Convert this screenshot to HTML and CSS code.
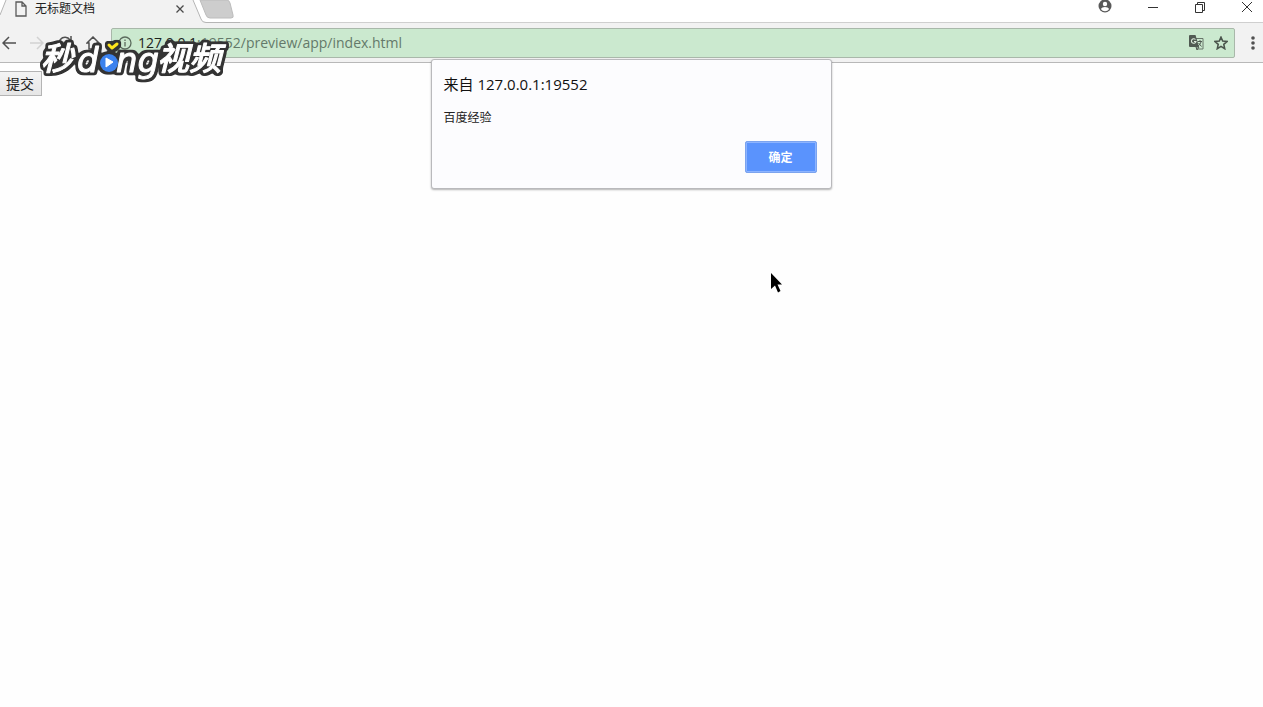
FILE: index.html
```html
<!DOCTYPE html>
<html lang="zh-CN">
<head>
    <meta charset="utf-8">
    <title>无标题文档</title>
    <meta name="viewport" content="width=device-width,initial-scale=1.0">
    <link rel="stylesheet" href="styles.css">
</head>
<body>
<header class="browser">
    <div class="tabs">
        <svg class="tab-shape" width="240" height="24" viewBox="0 0 240 24">
            <path d="M0 24V15L6 0H193L201 19Q202 22.500 206 22.500H240V24Z" fill="#f2f2f2"/>
            <path d="M0 15L6 0M193 0L201 19Q202 22.500 206 22.500H240" fill="none" stroke="#b5b5b5"/>
            <path d="M200 0H227Q229 0 230 3L233 15Q234 18 231 18H210Q207 18 206 15Z" fill="#cdcdcd" stroke="#bcbcbc"/>
        </svg>
        <div class="tab">
            <svg width="12" height="16" viewBox="0 0 12 16" fill="none" stroke="#5a5a5a" stroke-width="1.300"><path d="M1 1H7L11 5V15H1ZM7 1V5H11"/></svg>
            <span class="tab-title">无标题文档</span>
            <button class="icon" aria-label="关闭标签页"><svg width="8" height="8" viewBox="0 0 8 8" stroke="#4a4a4a" stroke-width="1.300"><path d="M.5 .5L7.500 7.500M7.500 .5L.5 7.500"/></svg></button>
        </div>
        <div class="window">
            <button class="icon" aria-label="用户"><svg width="14" height="14" viewBox="0 0 14 14"><circle cx="7" cy="6" r="6.500" fill="#5a5a5a"/><circle cx="7" cy="4" r="2.200" fill="#fff"/><path d="M2.800 9Q4 7 7 7T11.200 9Q9.500 11.200 7 11.200T2.800 9Z" fill="#fff"/></svg></button>
            <button class="icon" aria-label="最小化"><svg width="12" height="12" viewBox="0 0 12 12" stroke="#333"><path d="M1 6.500H11"/></svg></button>
            <button class="icon" aria-label="还原"><svg width="12" height="12" viewBox="0 0 12 12" fill="none" stroke="#333"><path d="M1.500 3.500H8.500V11.500H1.500ZM3.500 3V1.500H10.500V9.500H9"/></svg></button>
            <button class="icon" aria-label="关闭"><svg width="12" height="12" viewBox="0 0 12 12" stroke="#333"><path d="M1 1L11 11M11 1L1 11"/></svg></button>
        </div>
    </div>
    <div class="toolbar">
        <nav class="nav">
            <button class="icon" aria-label="后退"><svg width="14" height="14" viewBox="0 0 14 14" fill="none" stroke="#505050" stroke-width="1.500"><path d="M14 7H1M7 1L1 7L7 13"/></svg></button>
            <button class="icon" aria-label="前进" disabled><svg width="14" height="14" viewBox="0 0 14 14" fill="none" stroke="#d2d2d2" stroke-width="1.500"><path d="M0 7H13M7 1L13 7L7 13"/></svg></button>
            <button class="icon" aria-label="刷新"><svg width="14" height="14" viewBox="0 0 14 14" fill="none" stroke="#505050" stroke-width="1.500"><path d="M12 4A6 6 0 1 0 13 8M13 0V5H8"/></svg></button>
            <button class="icon" aria-label="主页"><svg width="14" height="14" viewBox="0 0 14 14" fill="none" stroke="#505050" stroke-width="1.500"><path d="M1 7L7 1L13 7H11V13H3V7Z"/></svg></button>
        </nav>
        <div class="address">
            <svg width="14" height="14" viewBox="0 0 14 14" fill="none" stroke="#5c6b5e" stroke-width="1.300"><circle cx="7" cy="7" r="6"/><path d="M7 6V10.500M7 3.500V5"/></svg>
            <div class="url"><span class="host">127.0.0.1</span>:19552/preview/app/index.html</div>
            <button class="icon" aria-label="翻译此页"><svg width="15" height="15" viewBox="0 0 15 15" fill="none"><path d="M6.500 3.500H14V14H8" stroke="#68766a"/><path d="M0 1Q0 0 1 0H6.500L10 12H1Q0 12 0 11Z" fill="#505a52"/><path d="M6.500 4.500A2.300 2.300 0 1 0 7 6.500H5" stroke="#dcebdc" stroke-width="1.100"/><path d="M8.500 6.500H13M11 5V6.500M12 7Q11 10 9 11M9.500 8L12.500 11.500M7 12L8 15L10 12Z" stroke="#505a52"/></svg></button>
            <button class="icon" aria-label="收藏"><svg width="14" height="14" viewBox="0 0 14 14" fill="none" stroke="#4a554c" stroke-width="1.600"><path d="M7 1.200L8.700 5.100L13 5.500L9.800 8.300L10.700 12.700L7 10.400L3.300 12.700L4.200 8.300L1 5.500L5.300 5.100Z"/></svg></button>
        </div>
        <button class="icon menu" aria-label="菜单"><svg width="4" height="14" viewBox="0 0 4 14" fill="#505050"><circle cx="2" cy="2" r="1.800"/><circle cx="2" cy="7" r="1.800"/><circle cx="2" cy="12" r="1.800"/></svg></button>
    </div>
</header>
<main class="page">
    <button class="submit">提交</button>
</main>

<div class="dialog" role="alertdialog" aria-labelledby="dialog-title" aria-describedby="dialog-text">
    <h1 id="dialog-title">来自 127.0.0.1:19552</h1>
    <p id="dialog-text">百度经验</p>
    <div class="buttons"><button class="ok">确定</button></div>
</div>

<!-- 水印 -->
<svg class="watermark" width="210" height="60" viewBox="0 0 210 60">
    <filter id="edge" x="-10%" y="-20%" width="120%" height="140%" color-interpolation-filters="sRGB">
        <feMorphology in="SourceAlpha" operator="dilate" radius="2"/>
        <feGaussianBlur stdDeviation="1.300"/>
        <feComponentTransfer result="a"><feFuncA type="linear" slope="4" intercept="-0.600"/></feComponentTransfer>
        <feFlood flood-color="#333"/>
        <feComposite in2="a" operator="in" result="e"/>
        <feMerge><feMergeNode in="e"/><feMergeNode in="SourceGraphic"/></feMerge>
    </filter>
    <g filter="url(#edge)">
        <text class="mark-cn" x="11" y="39">秒</text>
        <text class="mark-en" x="47" y="41">d</text>
        <text class="mark-en" x="86" y="41">ng</text>
        <text class="mark-cn" x="127" y="39">视频</text>
        <circle cx="79" cy="32" r="9" fill="#3c82ee"/>
        <path d="M79 14L82 17L87 13" fill="none" stroke="#ffe51c" stroke-width="3" stroke-linejoin="round" stroke-linecap="round"/>
    </g>
    <path d="M76 27L83 31L76 36Z" fill="#fff" stroke="#fff" stroke-linejoin="round"/>
</svg>

<svg class="cursor" width="12" height="20" viewBox="0 0 12 20"><path d="M0 0V16L4 12.500L7 19.500L9.500 18L6.500 11.500H11Z" fill="#000"/></svg>
</body>
</html>
```
FILE: styles.css
```css
*{box-sizing:border-box;}
body{margin:0;min-height:100vh;background:#fefefe;color:#222;font-family:"Open Sans","Noto Sans CJK SC",sans-serif;font-size:14px;}
button{font-family:inherit;margin:0;}
svg{display:block;flex:none;}
.icon{padding:0;border:0;background:none;flex:none;}

.tabs{position:relative;display:flex;justify-content:space-between;height:23px;border-bottom:1px solid #cfcfcf;background:#fff;}
.tab-shape{position:absolute;left:0;top:0;}
.tab{position:relative;display:flex;align-items:center;width:184px;height:17px;padding-left:15px;}
.tab-title{flex:1;padding-left:8px;font-size:12px;line-height:16px;}
.window{display:flex;align-items:center;gap:35px;height:14px;padding-right:10px;}

.toolbar{display:flex;align-items:center;height:40px;border-bottom:1px solid #b8b8b8;background:#f2f2f2;}
.nav{display:flex;gap:14px;width:111px;padding-left:2px;}
.address{flex:1;display:flex;align-items:center;gap:10px;height:30px;padding:0 6px;border:1px solid #a9b8aa;border-radius:2px;background:#cbe9cf;}
.url{flex:1;margin-left:-4px;color:#64796a;font-size:14px;line-height:20px;white-space:nowrap;}
.host{color:#1c241d;}
.menu{margin:0 8px 0 16px;}

.page{padding-top:8px;}
.submit{display:block;height:25px;padding:0 7px 0 6px;border:1px solid #b4b4b4;border-left:0;background:#ececec;background:linear-gradient(#f4f4f4,#e6e6e6);color:#222;font-size:14px;line-height:20px;}

.dialog{position:absolute;top:59px;left:50%;width:401px;margin-left:-201px;padding:14px 14px 15px 12px;border:1px solid #b9b9bc;border-radius:3px;background:#fcfcfe;box-shadow:0 1px 2px rgba(0,0,0,.3);}
.dialog h1{margin:0;font-size:15px;font-weight:400;line-height:20px;color:#111;}
.dialog p{margin:14px 0 13px;font-size:12px;line-height:20px;}
.buttons{display:flex;justify-content:flex-end;}
.ok{width:72px;height:32px;padding:0;border:1px solid #7ba3ee;border-radius:2px;box-shadow:inset 0 0 0 1px #8db4ff;background:#5a93fd;color:#fff;font-size:12px;font-weight:700;}

.watermark{position:absolute;left:30px;top:31px;}
.watermark text{fill:#fff;stroke:#fff;stroke-width:1px;stroke-linejoin:round;}
.mark-cn{font:italic 500 32px "Noto Sans CJK SC",sans-serif;}
.mark-en{font:italic 400 34px "DejaVu Sans",sans-serif;}

.cursor{position:absolute;left:771px;top:273px;}
```
